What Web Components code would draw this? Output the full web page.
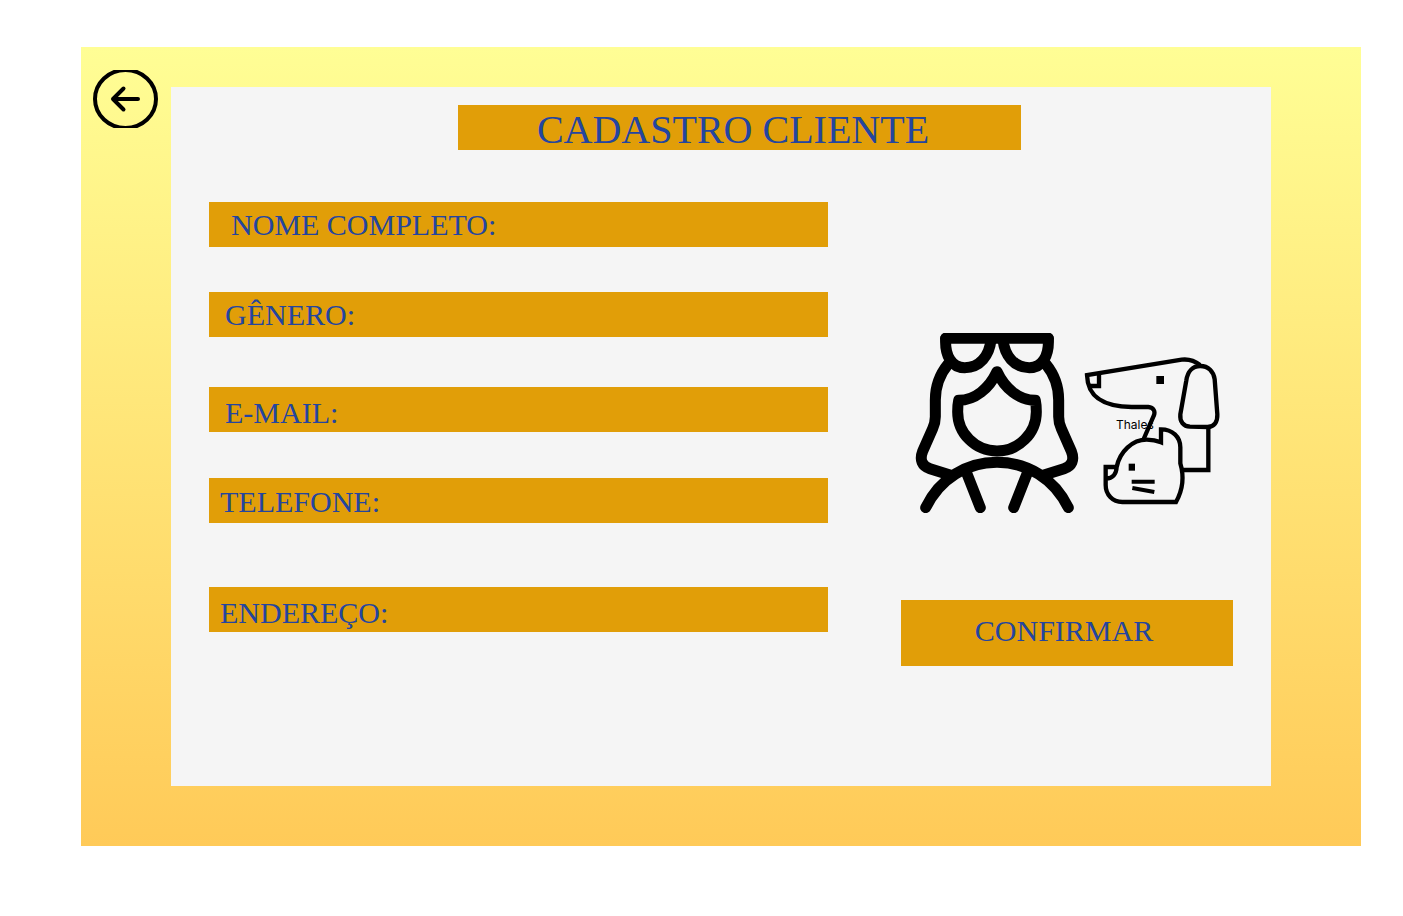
<!DOCTYPE html>
<html lang="pt-BR">
<head>
<meta charset="utf-8">
<meta name="viewport" content="width=device-width, initial-scale=1">
<title>Cadastro Cliente</title>
<style>
  body {
    margin: 0;
    background: #fff;
    color: #24459f;
    font-family: "Liberation Serif", "Times New Roman", serif;
    --bar: #e19e08;
  }
</style>
</head>
<body>
<register-page></register-page>

<template id="page">
  <style>
    :host { display: block; padding: 47px 42px 70px 81px; }
    .frame {
      display: grid;
      grid-template-columns: 90px minmax(0, 1fr) 90px;
      align-items: start;
      background: linear-gradient(#fffe95, #ffca58);
    }
    back-button { margin: 23px 0 0 12px; }
    main { margin: 40px 0 60px; padding: 18px 38px 120px; background: #f5f5f5; }
    title-bar { margin: 0 212px 52px 249px; }
    form { display: grid; grid-template-columns: minmax(0, 619fr) minmax(0, 332fr); column-gap: 73px; }
    .fields { display: flex; flex-direction: column; }
    .fields > :nth-child(1) { margin-bottom: 45px; }
    .fields > :nth-child(2) { margin-bottom: 50px; }
    .fields > :nth-child(3) { margin-bottom: 46px; }
    .fields > :nth-child(4) { margin-bottom: 64px; }
    .side { display: flex; flex-direction: column; padding-top: 131px; gap: 87px; }
  </style>
  <div class="frame">
    <back-button></back-button>
    <main>
      <title-bar>CADASTRO CLIENTE</title-bar>
      <form>
        <div class="fields">
          <form-field label="NOME COMPLETO:" style="--indent: 22px"></form-field>
          <form-field label="GÊNERO:" style="--indent: 16px"></form-field>
          <form-field label="E-MAIL:" type="email" style="--indent: 16px; --drop: 6px"></form-field>
          <form-field label="TELEFONE:" type="tel" style="--indent: 11px; --drop: 3px"></form-field>
          <form-field label="ENDEREÇO:" style="--indent: 11px; --drop: 6px"></form-field>
        </div>
        <div class="side">
          <client-art>Thales</client-art>
          <confirm-button>CONFIRMAR</confirm-button>
        </div>
      </form>
    </main>
  </div>
</template>

<template id="back">
  <style>
    :host { display: block; }
    button { display: block; padding: 0; border: 0; background: none; cursor: pointer; }
    svg { display: block; }
  </style>
  <button type="button" aria-label="Voltar">
    <svg width="65" height="58" viewBox="0 0 65 58" fill="none" stroke="#000" stroke-width="4" stroke-linecap="round" stroke-linejoin="round">
      <ellipse cx="32.5" cy="29" rx="30.5" ry="29"/>
      <path d="M45 29H20M30.500 18.500L20 29L30.500 39.500"/>
    </svg>
  </button>
</template>

<template id="title">
  <style>
    :host { display: block; background: var(--bar); }
    h1 { margin: 0; padding: 5px 13px 0 0; font-size: 40px; font-weight: 400; line-height: 40px; text-align: center; white-space: nowrap; }
  </style>
  <h1><slot></slot></h1>
</template>

<template id="field">
  <style>
    :host { display: block; }
    .bar { display: flex; box-sizing: border-box; height: 45px; padding: var(--drop, 0px) 12px 0 var(--indent); background: var(--bar); font-size: 30px; line-height: calc(45px - var(--drop, 0px)); }
    label { flex: none; white-space: nowrap; }
    input { flex: 1; min-width: 0; padding: 0 0 0 12px; border: 0; outline: 0; background: none; color: inherit; font: inherit; }
  </style>
  <div class="bar"><label for="value"></label><input id="value"></div>
</template>

<template id="art">
  <style>
    :host { display: block; }
    figure { position: relative; display: flex; align-items: flex-start; gap: 5px; margin: 0; padding-left: 14px; }
    svg { display: block; flex: none; fill: none; stroke: #000; }
    .pets { margin-top: 24px; }
    .solid { fill: #000; stroke: none; }
    /* The name is written across the dog's neck. */
    figcaption { position: absolute; left: 215px; top: 84px; color: #000; font: 12px/16px Inter, sans-serif; }
  </style>
  <figure>
    <svg width="164" height="180" viewBox="45 39 492 540" stroke-width="33" stroke-linecap="round" stroke-linejoin="round" aria-hidden="true">
      <path d="M137 55H445"/>
      <path d="M137 55C134 107 155 143 194 143C240 143 268 106 273 60"/>
      <path d="M445 55C448 107 427 143 388 143C342 143 314 106 309 60"/>
      <path d="M144 133C118 165 106 200 106 240V290C106 305 104 312 98 326L68 394C58 420 66 438 90 446L150 465"/>
      <path d="M438 133C464 165 476 200 476 240V290C476 305 478 312 484 326L514 394C524 420 516 438 492 446L432 465"/>
      <path d="M291 155C268 205 225 241 176 241C174 250 173 262 173 275A118 118 0 0 0 409 275C409 262 408 250 406 241C357 241 314 205 291 155Z"/>
      <path d="M77 563C120 475 200 427 291 427S462 475 505 563"/>
      <path d="M200 459L241 563M382 459L341 563"/>
    </svg>
    <svg class="pets" width="137" height="148" viewBox="27 36 411 444" stroke-width="13" aria-hidden="true">
      <path d="M375 60C360 48 345 41 320 44L36 90C38 160 90 185 170 186H220C236 187 242 200 236 213L206 282"/>
      <path d="M72 84V123H42"/>
      <path class="solid" d="M244 93h23v24h-23z"/>
      <path d="M334 106C338 78 354 63 376 63C400 63 416 80 419 103L427 208C428 232 417 245 398 246L345 245C325 244 314 230 316 208Z"/>
      <path d="M400 246V375H322"/>
      <path d="M125 366C134 320 172 284 215 284C233 284 246 287 258 292V253C292 253 316 275 316 307V355C328 395 323 435 303 471H142C112 471 92 448 92 420V366H125C124 388 112 400 94 400"/>
      <path class="solid" d="M161 356h19v21h-19z"/>
      <path d="M170 410H239M172 429L238 441" stroke-width="12"/>
    </svg>
    <figcaption><slot></slot></figcaption>
  </figure>
</template>

<template id="confirm">
  <style>
    :host { display: block; }
    button { display: block; width: 100%; height: 66px; padding: 0 6px 4px 0; border: 0; border-radius: 0; background: var(--bar); color: inherit; font: inherit; font-size: 30px; cursor: pointer; }
  </style>
  <button type="button"><slot></slot></button>
</template>

<script>
  class TemplateElement extends HTMLElement {
    constructor() {
      super();
      const template = document.getElementById(this.constructor.template);
      this.attachShadow({ mode: "open" }).append(template.content.cloneNode(true));
    }
  }

  class BackButton extends TemplateElement { static template = "back"; }
  class TitleBar extends TemplateElement { static template = "title"; }
  class ClientArt extends TemplateElement { static template = "art"; }
  class ConfirmButton extends TemplateElement { static template = "confirm"; }
  class FormField extends TemplateElement {
    static template = "field";
    connectedCallback() {
      this.shadowRoot.querySelector("label").textContent = this.getAttribute("label");
      this.shadowRoot.querySelector("input").type = this.getAttribute("type") || "text";
    }
  }
  class RegisterPage extends TemplateElement { static template = "page"; }

  customElements.define("back-button", BackButton);
  customElements.define("title-bar", TitleBar);
  customElements.define("form-field", FormField);
  customElements.define("client-art", ClientArt);
  customElements.define("confirm-button", ConfirmButton);
  customElements.define("register-page", RegisterPage);
</script>
</body>
</html>
